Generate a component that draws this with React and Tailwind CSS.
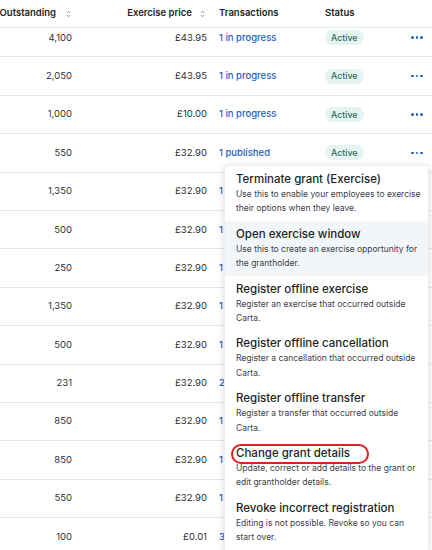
const rows = [
  { out: "4,100", price: "£43.95", tx: "1 in progress" },
  { out: "2,050", price: "£43.95", tx: "1 in progress" },
  { out: "1,000", price: "£10.00", tx: "1 in progress" },
  { out: "550", price: "£32.90", tx: "1 published" },
  { out: "1,350", price: "£32.90", tx: "1 in progress" },
  { out: "500", price: "£32.90", tx: "1 in progress" },
  { out: "250", price: "£32.90", tx: "1 in progress" },
  { out: "1,350", price: "£32.90", tx: "1 in progress" },
  { out: "500", price: "£32.90", tx: "1 in progress" },
  { out: "231", price: "£32.90", tx: "2 in progress" },
  { out: "850", price: "£32.90", tx: "1 in progress" },
  { out: "850", price: "£32.90", tx: "1 in progress" },
  { out: "550", price: "£32.90", tx: "1 in progress" },
  { out: "100", price: "£0.01", tx: "3 in progress" },
];

const actions = [
  {
    title: "Terminate grant (Exercise)",
    desc: "Use this to enable your employees to exercise their options when they leave.",
  },
  {
    title: "Open exercise window",
    desc: "Use this to create an exercise opportunity for the grantholder.",
    active: true,
  },
  { title: "Register offline exercise", desc: "Register an exercise that occurred outside Carta." },
  { title: "Register offline cancellation", desc: "Register a cancellation that occurred outside Carta." },
  { title: "Register offline transfer", desc: "Register a transfer that occurred outside Carta." },
  {
    title: "Change grant details",
    desc: "Update, correct or add details to the grant or edit grantholder details.",
    circled: true,
  },
  { title: "Revoke incorrect registration", desc: "Editing is not possible. Revoke so you can start over." },
];

const SortIcon = () => (
  <svg width="5" height="8" viewBox="0 0 5 8" className="shrink-0">
    <path d="M1 2.8 2.5 1.3 4 2.8M1 5.2 2.5 6.7 4 5.2" fill="none" stroke="#6b7280" strokeWidth="0.9" />
  </svg>
);

const Dots = () => (
  <div className="flex items-center gap-[2px]">
    <span className="w-[2.5px] h-[2.5px] rounded-full bg-[#1f5fbf]" />
    <span className="w-[2.5px] h-[2.5px] rounded-full bg-[#1f5fbf]" />
    <span className="w-[2.5px] h-[2.5px] rounded-full bg-[#1f5fbf]" />
  </div>
);

const cols = "grid grid-cols-[84px_135px_106px_75px_29px]";

export default function App() {
  return (
    <div
      className="relative w-[432px] h-[550px] overflow-hidden bg-white text-[#2b2f33]"
      style={{ fontFamily: "Inter, 'Noto Sans', sans-serif" }}
    >
      {/* Header */}
      <div className={`${cols} h-[28px] items-center border-b border-[#e6e9ec] text-[9.5px] font-semibold text-[#1c1f23]`}>
        <div className="flex items-center justify-end gap-[10px] pr-[13px]">
          <span className="whitespace-nowrap">Outstanding</span>
          <SortIcon />
        </div>
        <div className="flex items-center justify-end gap-[8px] pr-[14px]">
          <span>Exercise price</span>
          <SortIcon />
        </div>
        <div>Transactions</div>
        <div>Status</div>
        <div />
      </div>

      {/* Body, scrolled a little under the header */}
      <div className="h-[522px] overflow-hidden">
        <div className="-mt-[9px]">
          {rows.map((r, i) => (
            <div
              key={i}
              className={`${cols} h-[38.4px] items-center border-b border-[#e6e9ec] text-[9.5px]`}
            >
              <div className="text-right pr-[12px]">{r.out}</div>
              <div className="text-right pr-[12px]">{r.price}</div>
              <div className="font-medium text-[#1f5fbf] whitespace-nowrap">{r.tx}</div>
              <div>
                <span className="inline-flex items-center h-[15px] px-[6px] rounded-full bg-[#e6f4f1] text-[#2d6a5d] text-[8.8px] font-medium">
                  Active
                </span>
              </div>
              <div className="flex justify-start pl-[11px]">
                <Dots />
              </div>
            </div>
          ))}
        </div>
      </div>

      {/* Actions menu */}
      <div className="absolute left-[224px] top-[165px] w-[205px] bg-white border border-[#eceef0] shadow-[0_2px_8px_rgba(0,0,0,0.15)]">
        {actions.map((a) => (
          <div
            key={a.title}
            className={`relative h-[54.8px] pl-[11px] pr-[6px] pt-[5px] ${a.active ? "bg-[#f2f6f9]" : ""}`}
          >
            <div className="text-[11.5px] leading-[16px] font-medium text-[#1c1f23] whitespace-nowrap">{a.title}</div>
            <div className="text-[8.5px] leading-[14.4px] text-[#3b4046]">{a.desc}</div>
            {a.circled && (
              <div className="absolute left-[6px] top-[4px] w-[138px] h-[20px] rounded-full border-2 border-[#e11d1d]" />
            )}
          </div>
        ))}
      </div>
    </div>
  );
}
